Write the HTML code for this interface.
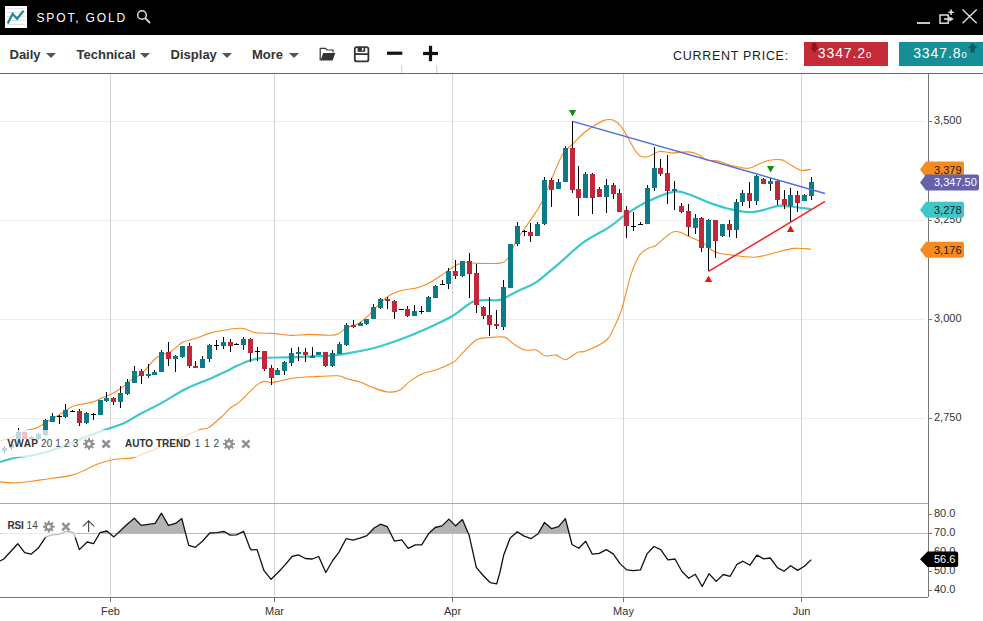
<!DOCTYPE html>
<html><head><meta charset="utf-8"><title>SPOT, GOLD</title>
<style>
html,body{margin:0;padding:0}
body{width:983px;height:621px;overflow:hidden;background:#fff;position:relative;font-family:"Liberation Sans",sans-serif}
.topbar{position:absolute;left:0;top:0;width:983px;height:35px;background:#000}
.logo{position:absolute;left:5px;top:6px;width:22px;height:22px;background:#fff}
.title{position:absolute;left:36.5px;top:11px;color:#fff;font-size:12px;letter-spacing:1.85px;line-height:14px}
.toolbar{position:absolute;left:0;top:35px;width:983px;height:38px;background:#fff;border-bottom:1px solid #666}
.menu{position:absolute;top:13px;font-size:13px;font-weight:bold;color:#333;line-height:14px}
.caret{position:absolute;top:17.6px;width:0;height:0;border-left:5px solid transparent;border-right:5px solid transparent;border-top:5.5px solid #555}
.cp{position:absolute;left:673px;top:14px;font-size:12.5px;letter-spacing:0.7px;color:#222;line-height:14px}
.pbox{position:absolute;top:7px;height:24px;color:#fff;font-size:14px;line-height:24px;letter-spacing:0.9px}
svg.chart{position:absolute;left:0;top:0}
</style></head><body>
<div class="topbar">
 <div class="logo"><svg width="22" height="22" viewBox="0 0 22 22">
  <g stroke="#e2e2e2" stroke-width="1"><line x1="2" y1="2.5" x2="20" y2="2.5"/><line x1="2" y1="6.5" x2="20" y2="6.5"/><line x1="2" y1="10.5" x2="20" y2="10.5"/><line x1="2" y1="14.5" x2="20" y2="14.5"/><line x1="2" y1="18.5" x2="20" y2="18.5"/></g>
  <polyline points="2.7,17.6 7.6,7.8 12.1,12.7 18.6,4.6" fill="none" stroke="#1a8796" stroke-width="2.2"/></svg></div>
 <div class="title">SPOT, GOLD</div>
 <svg style="position:absolute;left:136px;top:9px" width="16" height="16" viewBox="0 0 16 16"><circle cx="6" cy="6" r="4.3" fill="none" stroke="#ddd" stroke-width="1.5"/><line x1="9.2" y1="9.2" x2="14" y2="14" stroke="#ddd" stroke-width="1.8"/></svg>
 <svg style="position:absolute;left:910px;top:4px" width="73" height="28" viewBox="910 4 73 28">
  <line x1="917" y1="23" x2="930" y2="23" stroke="#ddd" stroke-width="1.8"/>
  <rect x="940" y="15" width="8.2" height="8.2" fill="none" stroke="#ddd" stroke-width="1.5"/>
  <path d="M944,19 L950,19" stroke="#ddd" stroke-width="1.6"/><path d="M949.3,16.2 L953.8,19 L949.3,21.8 Z" fill="#ddd"/>
  <path d="M951.1,9.5 L951.1,15 M948.4,12.2 L953.8,12.2" stroke="#ddd" stroke-width="1.6"/>
  <path d="M962.5,9.5 L976.7,23.2 M976.7,9.5 L962.5,23.2" stroke="#ddd" stroke-width="1.4"/>
 </svg>
</div>
<div class="toolbar">
 <div class="menu" style="left:9.5px">Daily</div><div class="caret" style="left:45.9px"></div>
 <div class="menu" style="left:76.5px">Technical</div><div class="caret" style="left:140.4px"></div>
 <div class="menu" style="left:170.6px">Display</div><div class="caret" style="left:221.8px"></div>
 <div class="menu" style="left:252px">More</div><div class="caret" style="left:288.5px"></div>
 <svg style="position:absolute;left:300px;top:0" width="160" height="38" viewBox="300 35 160 38">
  <path d="M320.2,48.3 L325.5,48.3 L327,50 L333,50 L333,52.4" fill="none" stroke="#333" stroke-width="1.2"/>
  <path d="M320.2,48.3 L320.2,60.5" fill="none" stroke="#333" stroke-width="1.2"/>
  <path d="M320.5,60.5 L323.2,53 L335.3,53 L332.6,60.5 Z" fill="#333"/>
  <rect x="354.8" y="47.2" width="13.6" height="14.2" rx="2" fill="none" stroke="#333" stroke-width="1.8"/>
  <rect x="357.6" y="47.2" width="7.6" height="4.6" fill="#333"/>
  <rect x="361.9" y="47.9" width="1.6" height="2.6" fill="#fff"/>
  <rect x="354.8" y="53.2" width="13.6" height="1.8" fill="#333"/>
  <rect x="387" y="51.6" width="15.3" height="3.2" fill="#111"/>
  <rect x="423" y="51.9" width="15" height="3.2" fill="#111"/>
  <rect x="428.9" y="45.8" width="3.2" height="15.4" fill="#111"/>
  <line x1="401.8" y1="65" x2="401.8" y2="73" stroke="#ccc" stroke-width="1"/>
  <line x1="436.8" y1="65" x2="436.8" y2="73" stroke="#ccc" stroke-width="1"/>
 </svg>
 <div class="cp">CURRENT PRICE:</div>
 <div class="pbox" style="left:804px;width:84px;background:#c42a37">
  <svg style="position:absolute;left:5.6px;top:1.2px" width="9" height="10" viewBox="0 0 9 10"><path d="M2.1,0 L6.6,0 L6.6,4.6 L8.7,4.6 L4.35,9.6 L0,4.6 L2.1,4.6 Z" fill="#8b1520"/></svg>
  <span style="position:absolute;left:13.8px;top:-1px">3347.2<span style="font-size:9.5px;letter-spacing:0">0</span></span>
 </div>
 <div class="pbox" style="left:899px;width:84px;background:#168e98">
  <svg style="position:absolute;left:69.1px;top:1.2px" width="10" height="10" viewBox="0 0 10 10"><path d="M2.4,9.6 L6.9,9.6 L6.9,5 L9.4,5 L4.65,0 L0,5 L2.4,5 Z" fill="#0a5f66"/></svg>
  <span style="position:absolute;left:14.2px;top:-1px">3347.8<span style="font-size:9.5px;letter-spacing:0">0</span></span>
 </div>
</div>
<svg class="chart" width="983" height="621" viewBox="0 0 983 621">
<line x1="0" y1="121.5" x2="926" y2="121.5" stroke="#ededed" stroke-width="1"/>
<line x1="928" y1="121.5" x2="932" y2="121.5" stroke="#777" stroke-width="1"/>
<line x1="0" y1="220.5" x2="926" y2="220.5" stroke="#ededed" stroke-width="1"/>
<line x1="928" y1="220.5" x2="932" y2="220.5" stroke="#777" stroke-width="1"/>
<line x1="0" y1="319.5" x2="926" y2="319.5" stroke="#ededed" stroke-width="1"/>
<line x1="928" y1="319.5" x2="932" y2="319.5" stroke="#777" stroke-width="1"/>
<line x1="0" y1="418.5" x2="926" y2="418.5" stroke="#ededed" stroke-width="1"/>
<line x1="928" y1="418.5" x2="932" y2="418.5" stroke="#777" stroke-width="1"/>
<line x1="110.5" y1="74" x2="110.5" y2="597" stroke="#d4d4d4" stroke-width="1"/>
<line x1="110.5" y1="597" x2="110.5" y2="602" stroke="#777" stroke-width="1"/>
<line x1="274.5" y1="74" x2="274.5" y2="597" stroke="#d4d4d4" stroke-width="1"/>
<line x1="274.5" y1="597" x2="274.5" y2="602" stroke="#777" stroke-width="1"/>
<line x1="452.5" y1="74" x2="452.5" y2="597" stroke="#d4d4d4" stroke-width="1"/>
<line x1="452.5" y1="597" x2="452.5" y2="602" stroke="#777" stroke-width="1"/>
<line x1="623.5" y1="74" x2="623.5" y2="597" stroke="#d4d4d4" stroke-width="1"/>
<line x1="623.5" y1="597" x2="623.5" y2="602" stroke="#777" stroke-width="1"/>
<line x1="801.5" y1="74" x2="801.5" y2="597" stroke="#d4d4d4" stroke-width="1"/>
<line x1="801.5" y1="597" x2="801.5" y2="602" stroke="#777" stroke-width="1"/>
<line x1="0" y1="503.5" x2="928" y2="503.5" stroke="#aaa" stroke-width="1"/>
<line x1="0" y1="533.5" x2="928" y2="533.5" stroke="#bbb" stroke-width="1"/>
<line x1="0" y1="597.5" x2="928" y2="597.5" stroke="#777" stroke-width="1"/>
<line x1="928" y1="514.5" x2="932" y2="514.5" stroke="#777" stroke-width="1"/>
<line x1="928" y1="533.5" x2="932" y2="533.5" stroke="#777" stroke-width="1"/>
<line x1="928" y1="552.5" x2="932" y2="552.5" stroke="#777" stroke-width="1"/>
<line x1="928" y1="571.5" x2="932" y2="571.5" stroke="#777" stroke-width="1"/>
<line x1="928" y1="590.5" x2="932" y2="590.5" stroke="#777" stroke-width="1"/>
<line x1="928.5" y1="74" x2="928.5" y2="597" stroke="#777" stroke-width="1"/>
<path d="M0.0,441.2 C2.0,440.5 7.8,438.9 12.2,437.1 C16.6,435.3 22.2,432.2 26.4,430.6 C30.6,429.0 34.4,428.8 37.6,427.4 C40.8,426.0 41.9,424.8 45.8,422.5 C49.7,420.2 56.6,416.3 61.0,413.7 C65.4,411.1 68.8,408.2 72.2,406.6 C75.6,405.0 78.0,404.9 81.4,404.2 C84.8,403.4 89.2,403.1 92.6,402.1 C96.0,401.1 98.2,399.7 101.7,398.1 C105.2,396.6 110.2,394.8 113.9,392.8 C117.6,390.8 121.4,387.9 124.1,385.9 C126.8,383.9 127.0,382.9 130.0,380.8 C133.0,378.7 137.8,376.9 142.2,373.1 C146.6,369.3 151.7,361.4 156.4,357.8 C161.2,354.2 166.3,354.3 170.7,351.7 C175.1,349.1 178.8,344.3 182.9,342.1 C187.0,339.9 190.7,339.9 195.1,338.5 C199.5,337.1 204.6,334.8 209.3,333.4 C214.1,332.0 218.2,331.1 223.6,330.3 C229.0,329.5 236.5,327.9 241.9,328.3 C247.3,328.7 251.0,332.0 256.1,332.8 C261.2,333.6 266.6,333.0 272.4,333.4 C278.2,333.8 284.6,335.2 290.7,335.4 C296.8,335.6 302.4,334.4 309.0,334.4 C315.6,334.4 325.1,335.3 330.0,335.2 C334.9,335.1 335.4,335.2 338.1,334.0 C340.8,332.8 342.9,329.7 346.3,327.9 C349.7,326.1 354.8,325.5 358.5,323.4 C362.2,321.3 365.0,318.9 368.7,315.3 C372.4,311.8 377.2,305.6 380.9,302.1 C384.6,298.6 387.6,296.4 391.0,294.5 C394.4,292.6 396.8,291.6 401.2,290.5 C405.6,289.4 412.8,289.1 417.5,287.8 C422.2,286.5 425.3,285.1 429.7,282.7 C434.1,280.3 439.8,276.3 443.9,273.6 C448.0,270.9 450.7,268.3 454.1,266.4 C457.5,264.5 460.2,262.9 464.3,262.4 C468.4,261.9 472.1,263.4 478.5,263.4 C484.9,263.4 497.5,264.3 502.9,262.4 C508.3,260.5 508.8,255.9 511.1,252.2 C513.4,248.5 513.4,245.6 516.8,240.0 C520.2,234.4 527.2,225.2 531.4,218.9 C535.6,212.6 538.4,209.1 541.9,202.1 C545.4,195.1 548.9,185.0 552.4,177.0 C555.9,169.0 559.3,159.6 562.8,154.0 C566.3,148.4 569.8,147.0 573.3,143.5 C576.8,140.0 580.3,136.0 583.8,133.0 C587.3,130.0 590.7,127.9 594.2,125.7 C597.7,123.5 601.6,121.0 604.7,120.1 C607.9,119.2 610.5,119.2 613.1,120.1 C615.7,121.0 618.0,122.9 620.4,125.7 C622.8,128.6 625.4,133.4 627.7,137.2 C630.0,141.0 631.9,145.5 634.0,148.7 C636.1,151.8 637.8,154.8 640.3,156.1 C642.8,157.4 645.6,157.3 648.7,156.5 C651.9,155.7 655.4,152.1 659.2,151.5 C663.0,150.9 666.8,152.8 671.7,152.9 C676.6,153.0 684.0,151.6 688.5,151.9 C693.0,152.2 695.4,153.3 698.4,154.6 C701.4,155.9 703.6,158.8 706.7,159.9 C709.8,161.0 713.0,160.0 717.2,160.9 C721.4,161.8 726.6,164.3 731.8,165.5 C737.0,166.7 744.1,168.4 748.6,168.2 C753.1,168.0 755.5,165.4 759.0,164.1 C762.5,162.8 765.7,161.0 769.5,160.3 C773.3,159.6 778.5,159.2 782.0,159.9 C785.5,160.6 787.2,163.0 790.4,164.7 C793.5,166.4 797.5,169.5 800.9,170.3 C804.3,171.1 809.3,169.5 811.0,169.3" fill="none" stroke="#f98a1e" stroke-width="1.1"/>
<path d="M0.0,481.9 C2.7,482.1 9.5,483.2 16.3,482.9 C23.1,482.6 31.6,481.1 40.7,479.9 C49.9,478.6 63.7,477.1 71.2,475.4 C78.7,473.7 81.1,471.6 85.5,469.7 C89.9,467.8 93.0,465.7 97.7,464.0 C102.4,462.3 108.2,460.5 113.9,459.5 C119.7,458.5 126.8,459.1 132.2,457.9 C137.6,456.7 141.4,454.3 146.5,452.4 C151.6,450.5 156.7,448.9 162.8,446.3 C168.9,443.8 176.9,439.9 183.1,437.1 C189.3,434.3 195.7,431.1 200.0,429.5 C204.3,427.9 205.1,429.8 209.0,427.4 C212.9,424.9 220.2,417.9 223.6,414.8 C227.0,411.7 226.8,410.8 229.5,408.6 C232.2,406.4 236.7,404.3 239.9,401.6 C243.1,398.9 246.0,395.4 248.8,392.6 C251.7,389.8 254.5,386.8 257.0,384.9 C259.5,383.0 261.2,381.8 263.6,381.4 C266.0,381.0 268.9,382.6 271.2,382.6 C273.5,382.6 273.7,382.3 277.3,381.6 C280.9,380.9 286.8,379.0 292.8,378.2 C298.8,377.4 305.6,377.1 313.1,376.7 C320.6,376.3 332.3,375.4 338.0,375.8 C343.7,376.2 343.2,377.7 347.1,378.8 C351.0,379.9 357.3,381.1 361.4,382.5 C365.5,383.9 367.2,385.4 371.6,387.0 C376.0,388.6 383.1,391.5 387.8,392.0 C392.5,392.5 396.3,391.9 400.0,390.0 C403.7,388.1 406.5,383.6 410.2,380.9 C413.9,378.2 418.0,375.6 422.4,373.7 C426.8,371.8 431.9,371.4 436.7,369.7 C441.4,368.0 447.7,365.2 450.9,363.6 C454.1,362.0 454.1,361.9 456.1,360.0 C458.1,358.1 459.7,355.8 463.1,352.4 C466.5,349.0 472.2,342.1 476.5,339.7 C480.8,337.2 484.0,338.1 488.7,337.7 C493.4,337.3 500.4,336.1 504.5,337.1 C508.6,338.1 510.1,341.8 513.5,343.9 C516.9,346.0 521.0,349.0 524.8,350.0 C528.6,351.0 532.7,349.0 536.1,350.0 C539.5,351.0 541.7,354.9 545.1,355.8 C548.5,356.7 553.0,354.5 556.4,355.1 C559.8,355.8 561.8,360.2 565.4,359.7 C569.0,359.2 574.4,353.6 577.8,352.2 C581.2,350.8 581.0,353.1 585.7,351.1 C590.4,349.2 601.5,344.0 606.0,340.5 C610.5,337.0 610.1,335.6 612.7,330.3 C615.3,325.0 618.8,318.1 621.8,308.9 C624.8,299.7 627.8,284.1 630.8,275.1 C633.8,266.1 636.8,259.3 639.8,254.8 C642.8,250.3 646.2,249.5 648.8,248.0 C651.4,246.5 653.0,247.5 655.6,245.8 C658.2,244.1 661.6,240.2 664.6,237.9 C667.6,235.6 671.0,232.7 673.6,231.8 C676.2,230.9 677.8,231.5 680.4,232.3 C683.0,233.1 685.7,235.1 689.4,236.8 C693.1,238.5 698.3,240.0 702.6,242.5 C706.9,245.0 710.2,249.9 715.1,252.0 C720.0,254.1 725.2,254.2 731.8,255.1 C738.4,256.0 747.9,257.6 754.9,257.2 C761.9,256.8 767.1,254.5 773.7,253.0 C780.3,251.5 788.4,249.0 794.6,248.4 C800.8,247.8 808.3,249.1 811.0,249.2" fill="none" stroke="#f98a1e" stroke-width="1.1"/>
<path d="M0.0,462.0 C2.7,461.2 10.5,458.7 16.3,457.5 C22.1,456.3 27.2,456.7 34.6,455.0 C42.1,453.3 52.5,450.3 61.0,447.3 C69.5,444.3 78.7,439.8 85.5,437.1 C92.3,434.4 95.6,433.2 101.7,431.0 C107.8,428.8 117.4,425.8 122.1,423.9 C126.8,422.0 126.6,421.8 130.0,419.9 C133.4,418.0 137.3,415.4 142.4,412.7 C147.5,410.0 153.1,407.7 160.5,403.6 C167.9,399.5 178.5,392.5 187.0,388.3 C195.5,384.1 205.0,381.0 211.4,378.2 C217.8,375.4 221.2,373.7 225.4,371.7 C229.6,369.7 232.2,368.1 236.6,366.1 C241.0,364.1 247.5,361.2 252.1,359.8 C256.7,358.4 257.5,358.2 264.3,357.8 C271.1,357.4 281.9,357.6 292.8,357.2 C303.8,356.8 320.4,356.4 330.0,355.7 C339.6,355.0 342.8,354.2 350.3,352.9 C357.8,351.6 366.3,350.1 374.8,347.8 C383.3,345.5 392.8,342.2 401.5,339.0 C410.2,335.8 418.6,332.3 427.0,328.5 C435.4,324.7 444.4,320.7 452.0,316.3 C459.6,311.9 466.3,304.8 472.4,302.1 C478.5,299.4 484.1,300.4 488.7,300.0 C493.3,299.6 495.1,301.4 500.0,299.9 C504.9,298.4 512.0,293.8 518.0,290.9 C524.0,288.0 529.3,286.8 536.1,282.3 C542.9,277.8 550.7,270.4 558.6,263.8 C566.5,257.2 575.0,248.5 583.4,242.4 C591.8,236.3 601.8,231.9 608.9,227.3 C616.0,222.7 619.4,218.9 625.7,214.7 C632.0,210.5 638.6,205.9 646.6,202.1 C654.6,198.3 666.6,192.9 673.8,191.7 C681.0,190.5 684.5,193.1 690.0,194.8 C695.5,196.5 700.8,199.5 706.7,201.7 C712.6,203.9 718.6,206.2 725.6,208.0 C732.6,209.8 742.3,211.8 748.6,212.2 C754.9,212.5 758.3,211.1 763.2,210.1 C768.1,209.1 773.4,206.5 777.9,205.9 C782.4,205.3 784.9,206.0 790.4,206.5 C795.9,207.0 807.6,208.7 811.0,209.1" fill="none" stroke="#3cc8c8" stroke-width="2.2"/>
<line x1="4.5" y1="446" x2="4.5" y2="453" stroke="#000" stroke-width="1"/>
<rect x="2" y="448" width="5" height="3" fill="#0b7b88"/>
<line x1="11.5" y1="441" x2="11.5" y2="450" stroke="#000" stroke-width="1"/>
<rect x="9" y="444" width="5" height="4" fill="#0b7b88"/>
<line x1="18.5" y1="428" x2="18.5" y2="440" stroke="#000" stroke-width="1"/>
<rect x="16" y="432" width="5" height="7" fill="#0b7b88"/>
<line x1="24.5" y1="432" x2="24.5" y2="439" stroke="#000" stroke-width="1"/>
<rect x="22" y="432" width="5" height="7" fill="#c0283a"/>
<line x1="31.5" y1="436" x2="31.5" y2="440" stroke="#000" stroke-width="1"/>
<rect x="29" y="437" width="5" height="2" fill="#c0283a"/>
<line x1="38.5" y1="433" x2="38.5" y2="440" stroke="#000" stroke-width="1"/>
<rect x="36" y="434" width="5" height="5" fill="#0b7b88"/>
<line x1="45.5" y1="419" x2="45.5" y2="436" stroke="#000" stroke-width="1"/>
<rect x="43" y="420" width="5" height="15" fill="#0b7b88"/>
<line x1="52.5" y1="413" x2="52.5" y2="422" stroke="#000" stroke-width="1"/>
<rect x="50" y="416" width="5" height="6" fill="#0b7b88"/>
<line x1="59.5" y1="415" x2="59.5" y2="424" stroke="#000" stroke-width="1"/>
<line x1="57" y1="416.5" x2="62" y2="416.5" stroke="#000" stroke-width="1"/>
<line x1="65.5" y1="404" x2="65.5" y2="418" stroke="#000" stroke-width="1"/>
<rect x="63" y="410" width="5" height="7" fill="#0b7b88"/>
<line x1="72.5" y1="410" x2="72.5" y2="412" stroke="#000" stroke-width="1"/>
<line x1="70" y1="411.5" x2="75" y2="411.5" stroke="#000" stroke-width="1"/>
<line x1="79.5" y1="409" x2="79.5" y2="426" stroke="#000" stroke-width="1"/>
<rect x="77" y="411" width="5" height="12" fill="#c0283a"/>
<line x1="86.5" y1="412" x2="86.5" y2="424" stroke="#000" stroke-width="1"/>
<rect x="84" y="413" width="5" height="10" fill="#0b7b88"/>
<line x1="93.5" y1="413" x2="93.5" y2="420" stroke="#000" stroke-width="1"/>
<line x1="91" y1="414.5" x2="96" y2="414.5" stroke="#000" stroke-width="1"/>
<line x1="100.5" y1="400" x2="100.5" y2="415" stroke="#000" stroke-width="1"/>
<rect x="98" y="400" width="5" height="15" fill="#0b7b88"/>
<line x1="106.5" y1="392" x2="106.5" y2="402" stroke="#000" stroke-width="1"/>
<rect x="104" y="398" width="5" height="3" fill="#0b7b88"/>
<line x1="113.5" y1="397" x2="113.5" y2="405" stroke="#000" stroke-width="1"/>
<rect x="111" y="398" width="5" height="4" fill="#c0283a"/>
<line x1="120.5" y1="386" x2="120.5" y2="408" stroke="#000" stroke-width="1"/>
<rect x="118" y="393" width="5" height="9" fill="#0b7b88"/>
<line x1="127.5" y1="379" x2="127.5" y2="395" stroke="#000" stroke-width="1"/>
<rect x="125" y="382" width="5" height="12" fill="#0b7b88"/>
<line x1="134.5" y1="366" x2="134.5" y2="383" stroke="#000" stroke-width="1"/>
<rect x="132" y="371" width="5" height="12" fill="#0b7b88"/>
<line x1="141.5" y1="369" x2="141.5" y2="384" stroke="#000" stroke-width="1"/>
<rect x="139" y="371" width="5" height="5" fill="#c0283a"/>
<line x1="148.5" y1="364" x2="148.5" y2="378" stroke="#000" stroke-width="1"/>
<rect x="146" y="374" width="5" height="2" fill="#0b7b88"/>
<line x1="154.5" y1="370" x2="154.5" y2="375" stroke="#000" stroke-width="1"/>
<rect x="152" y="372" width="5" height="3" fill="#0b7b88"/>
<line x1="161.5" y1="350" x2="161.5" y2="372" stroke="#000" stroke-width="1"/>
<rect x="159" y="352" width="5" height="20" fill="#0b7b88"/>
<line x1="168.5" y1="342" x2="168.5" y2="366" stroke="#000" stroke-width="1"/>
<rect x="166" y="352" width="5" height="7" fill="#c0283a"/>
<line x1="175.5" y1="355" x2="175.5" y2="372" stroke="#000" stroke-width="1"/>
<rect x="173" y="356" width="5" height="3" fill="#0b7b88"/>
<line x1="182.5" y1="346" x2="182.5" y2="358" stroke="#000" stroke-width="1"/>
<rect x="180" y="346" width="5" height="11" fill="#0b7b88"/>
<line x1="189.5" y1="343" x2="189.5" y2="368" stroke="#000" stroke-width="1"/>
<rect x="187" y="346" width="5" height="20" fill="#c0283a"/>
<line x1="195.5" y1="361" x2="195.5" y2="368" stroke="#000" stroke-width="1"/>
<rect x="193" y="366" width="5" height="2" fill="#c0283a"/>
<line x1="202.5" y1="356" x2="202.5" y2="368" stroke="#000" stroke-width="1"/>
<rect x="200" y="359" width="5" height="9" fill="#0b7b88"/>
<line x1="209.5" y1="344" x2="209.5" y2="362" stroke="#000" stroke-width="1"/>
<rect x="207" y="345" width="5" height="14" fill="#0b7b88"/>
<line x1="216.5" y1="340" x2="216.5" y2="350" stroke="#000" stroke-width="1"/>
<line x1="214" y1="345.5" x2="219" y2="345.5" stroke="#000" stroke-width="1"/>
<line x1="223.5" y1="337" x2="223.5" y2="349" stroke="#000" stroke-width="1"/>
<rect x="221" y="342" width="5" height="4" fill="#0b7b88"/>
<line x1="230.5" y1="339" x2="230.5" y2="352" stroke="#000" stroke-width="1"/>
<rect x="228" y="342" width="5" height="4" fill="#c0283a"/>
<line x1="236.5" y1="343" x2="236.5" y2="345" stroke="#000" stroke-width="1"/>
<line x1="234" y1="344.5" x2="239" y2="344.5" stroke="#000" stroke-width="1"/>
<line x1="243.5" y1="337" x2="243.5" y2="350" stroke="#000" stroke-width="1"/>
<rect x="241" y="339" width="5" height="6" fill="#0b7b88"/>
<line x1="250.5" y1="338" x2="250.5" y2="362" stroke="#000" stroke-width="1"/>
<rect x="248" y="339" width="5" height="14" fill="#c0283a"/>
<line x1="257.5" y1="347" x2="257.5" y2="361" stroke="#000" stroke-width="1"/>
<line x1="255" y1="351.5" x2="260" y2="351.5" stroke="#000" stroke-width="1"/>
<line x1="264.5" y1="351" x2="264.5" y2="371" stroke="#000" stroke-width="1"/>
<rect x="262" y="351" width="5" height="18" fill="#c0283a"/>
<line x1="271.5" y1="365" x2="271.5" y2="385" stroke="#000" stroke-width="1"/>
<rect x="269" y="368" width="5" height="10" fill="#c0283a"/>
<line x1="277.5" y1="368" x2="277.5" y2="375" stroke="#000" stroke-width="1"/>
<rect x="275" y="370" width="5" height="5" fill="#0b7b88"/>
<line x1="284.5" y1="361" x2="284.5" y2="375" stroke="#000" stroke-width="1"/>
<rect x="282" y="362" width="5" height="9" fill="#0b7b88"/>
<line x1="291.5" y1="348" x2="291.5" y2="366" stroke="#000" stroke-width="1"/>
<rect x="289" y="353" width="5" height="10" fill="#0b7b88"/>
<line x1="298.5" y1="347" x2="298.5" y2="361" stroke="#000" stroke-width="1"/>
<rect x="296" y="352" width="5" height="2" fill="#0b7b88"/>
<line x1="305.5" y1="348" x2="305.5" y2="362" stroke="#000" stroke-width="1"/>
<rect x="303" y="352" width="5" height="3" fill="#c0283a"/>
<line x1="312.5" y1="347" x2="312.5" y2="358" stroke="#000" stroke-width="1"/>
<rect x="310" y="356" width="5" height="2" fill="#0b7b88"/>
<line x1="318.5" y1="352" x2="318.5" y2="355" stroke="#000" stroke-width="1"/>
<rect x="316" y="352" width="5" height="3" fill="#0b7b88"/>
<line x1="325.5" y1="352" x2="325.5" y2="367" stroke="#000" stroke-width="1"/>
<rect x="323" y="352" width="5" height="14" fill="#c0283a"/>
<line x1="332.5" y1="350" x2="332.5" y2="367" stroke="#000" stroke-width="1"/>
<rect x="330" y="353" width="5" height="13" fill="#0b7b88"/>
<line x1="339.5" y1="342" x2="339.5" y2="354" stroke="#000" stroke-width="1"/>
<rect x="337" y="344" width="5" height="10" fill="#0b7b88"/>
<line x1="346.5" y1="323" x2="346.5" y2="346" stroke="#000" stroke-width="1"/>
<rect x="344" y="325" width="5" height="20" fill="#0b7b88"/>
<line x1="353.5" y1="320" x2="353.5" y2="328" stroke="#000" stroke-width="1"/>
<rect x="351" y="325" width="5" height="2" fill="#c0283a"/>
<line x1="360.5" y1="322" x2="360.5" y2="326" stroke="#000" stroke-width="1"/>
<rect x="358" y="323" width="5" height="3" fill="#0b7b88"/>
<line x1="366.5" y1="319" x2="366.5" y2="325" stroke="#000" stroke-width="1"/>
<rect x="364" y="319" width="5" height="5" fill="#0b7b88"/>
<line x1="373.5" y1="304" x2="373.5" y2="319" stroke="#000" stroke-width="1"/>
<rect x="371" y="307" width="5" height="12" fill="#0b7b88"/>
<line x1="380.5" y1="298" x2="380.5" y2="309" stroke="#000" stroke-width="1"/>
<rect x="378" y="299" width="5" height="9" fill="#0b7b88"/>
<line x1="387.5" y1="297" x2="387.5" y2="309" stroke="#000" stroke-width="1"/>
<rect x="385" y="299" width="5" height="2" fill="#c0283a"/>
<line x1="394.5" y1="300" x2="394.5" y2="319" stroke="#000" stroke-width="1"/>
<rect x="392" y="301" width="5" height="11" fill="#c0283a"/>
<line x1="401.5" y1="309" x2="401.5" y2="310" stroke="#000" stroke-width="1"/>
<line x1="399" y1="309.5" x2="404" y2="309.5" stroke="#000" stroke-width="1"/>
<line x1="407.5" y1="306" x2="407.5" y2="317" stroke="#000" stroke-width="1"/>
<rect x="405" y="309" width="5" height="7" fill="#c0283a"/>
<line x1="414.5" y1="305" x2="414.5" y2="316" stroke="#000" stroke-width="1"/>
<rect x="412" y="311" width="5" height="5" fill="#0b7b88"/>
<line x1="421.5" y1="306" x2="421.5" y2="314" stroke="#000" stroke-width="1"/>
<line x1="419" y1="311.5" x2="424" y2="311.5" stroke="#000" stroke-width="1"/>
<line x1="428.5" y1="296" x2="428.5" y2="312" stroke="#000" stroke-width="1"/>
<rect x="426" y="297" width="5" height="15" fill="#0b7b88"/>
<line x1="435.5" y1="285" x2="435.5" y2="298" stroke="#000" stroke-width="1"/>
<rect x="433" y="286" width="5" height="12" fill="#0b7b88"/>
<line x1="442.5" y1="280" x2="442.5" y2="285" stroke="#000" stroke-width="1"/>
<line x1="440" y1="284.5" x2="445" y2="284.5" stroke="#000" stroke-width="1"/>
<line x1="448.5" y1="268" x2="448.5" y2="289" stroke="#000" stroke-width="1"/>
<rect x="446" y="271" width="5" height="13" fill="#0b7b88"/>
<line x1="455.5" y1="260" x2="455.5" y2="279" stroke="#000" stroke-width="1"/>
<rect x="453" y="271" width="5" height="5" fill="#c0283a"/>
<line x1="462.5" y1="261" x2="462.5" y2="277" stroke="#000" stroke-width="1"/>
<rect x="460" y="261" width="5" height="15" fill="#0b7b88"/>
<line x1="469.5" y1="253" x2="469.5" y2="298" stroke="#000" stroke-width="1"/>
<rect x="467" y="261" width="5" height="13" fill="#c0283a"/>
<line x1="476.5" y1="264" x2="476.5" y2="313" stroke="#000" stroke-width="1"/>
<rect x="474" y="273" width="5" height="32" fill="#c0283a"/>
<line x1="483.5" y1="306" x2="483.5" y2="319" stroke="#000" stroke-width="1"/>
<rect x="481" y="307" width="5" height="9" fill="#c0283a"/>
<line x1="489.5" y1="297" x2="489.5" y2="336" stroke="#000" stroke-width="1"/>
<rect x="487" y="315" width="5" height="10" fill="#c0283a"/>
<line x1="496.5" y1="310" x2="496.5" y2="329" stroke="#000" stroke-width="1"/>
<rect x="494" y="324" width="5" height="2" fill="#c0283a"/>
<line x1="503.5" y1="280" x2="503.5" y2="330" stroke="#000" stroke-width="1"/>
<rect x="501" y="287" width="5" height="40" fill="#0b7b88"/>
<line x1="510.5" y1="244" x2="510.5" y2="288" stroke="#000" stroke-width="1"/>
<rect x="508" y="244" width="5" height="44" fill="#0b7b88"/>
<line x1="517.5" y1="222" x2="517.5" y2="246" stroke="#000" stroke-width="1"/>
<rect x="515" y="226" width="5" height="18" fill="#0b7b88"/>
<line x1="524.5" y1="230" x2="524.5" y2="236" stroke="#000" stroke-width="1"/>
<line x1="522" y1="231.5" x2="527" y2="231.5" stroke="#000" stroke-width="1"/>
<line x1="530.5" y1="223" x2="530.5" y2="242" stroke="#000" stroke-width="1"/>
<rect x="528" y="232" width="5" height="4" fill="#c0283a"/>
<line x1="537.5" y1="222" x2="537.5" y2="236" stroke="#000" stroke-width="1"/>
<rect x="535" y="224" width="5" height="12" fill="#0b7b88"/>
<line x1="544.5" y1="177" x2="544.5" y2="225" stroke="#000" stroke-width="1"/>
<rect x="542" y="180" width="5" height="44" fill="#0b7b88"/>
<line x1="551.5" y1="178" x2="551.5" y2="207" stroke="#000" stroke-width="1"/>
<rect x="549" y="180" width="5" height="10" fill="#c0283a"/>
<line x1="558.5" y1="179" x2="558.5" y2="189" stroke="#000" stroke-width="1"/>
<rect x="556" y="182" width="5" height="7" fill="#0b7b88"/>
<line x1="565.5" y1="146" x2="565.5" y2="182" stroke="#000" stroke-width="1"/>
<rect x="563" y="148" width="5" height="34" fill="#0b7b88"/>
<line x1="572.5" y1="121" x2="572.5" y2="193" stroke="#000" stroke-width="1"/>
<rect x="570" y="148" width="5" height="42" fill="#c0283a"/>
<line x1="578.5" y1="166" x2="578.5" y2="216" stroke="#000" stroke-width="1"/>
<rect x="576" y="189" width="5" height="9" fill="#c0283a"/>
<line x1="585.5" y1="172" x2="585.5" y2="198" stroke="#000" stroke-width="1"/>
<rect x="583" y="174" width="5" height="24" fill="#0b7b88"/>
<line x1="592.5" y1="173" x2="592.5" y2="214" stroke="#000" stroke-width="1"/>
<rect x="590" y="174" width="5" height="24" fill="#c0283a"/>
<line x1="599.5" y1="187" x2="599.5" y2="197" stroke="#000" stroke-width="1"/>
<rect x="597" y="189" width="5" height="8" fill="#c0283a"/>
<line x1="606.5" y1="179" x2="606.5" y2="213" stroke="#000" stroke-width="1"/>
<rect x="604" y="185" width="5" height="12" fill="#0b7b88"/>
<line x1="613.5" y1="183" x2="613.5" y2="199" stroke="#000" stroke-width="1"/>
<rect x="611" y="185" width="5" height="9" fill="#c0283a"/>
<line x1="619.5" y1="189" x2="619.5" y2="212" stroke="#000" stroke-width="1"/>
<rect x="617" y="193" width="5" height="19" fill="#c0283a"/>
<line x1="626.5" y1="206" x2="626.5" y2="238" stroke="#000" stroke-width="1"/>
<rect x="624" y="210" width="5" height="16" fill="#c0283a"/>
<line x1="633.5" y1="212" x2="633.5" y2="231" stroke="#000" stroke-width="1"/>
<line x1="631" y1="226.5" x2="636" y2="226.5" stroke="#000" stroke-width="1"/>
<line x1="640.5" y1="222" x2="640.5" y2="225" stroke="#000" stroke-width="1"/>
<line x1="638" y1="224.5" x2="643" y2="224.5" stroke="#000" stroke-width="1"/>
<line x1="647.5" y1="185" x2="647.5" y2="224" stroke="#000" stroke-width="1"/>
<rect x="645" y="188" width="5" height="36" fill="#0b7b88"/>
<line x1="654.5" y1="147" x2="654.5" y2="191" stroke="#000" stroke-width="1"/>
<rect x="652" y="168" width="5" height="20" fill="#0b7b88"/>
<line x1="660.5" y1="159" x2="660.5" y2="176" stroke="#000" stroke-width="1"/>
<rect x="658" y="168" width="5" height="6" fill="#c0283a"/>
<line x1="667.5" y1="155" x2="667.5" y2="204" stroke="#000" stroke-width="1"/>
<rect x="665" y="173" width="5" height="18" fill="#c0283a"/>
<line x1="674.5" y1="181" x2="674.5" y2="210" stroke="#000" stroke-width="1"/>
<rect x="672" y="189" width="5" height="2" fill="#0b7b88"/>
<line x1="681.5" y1="203" x2="681.5" y2="213" stroke="#000" stroke-width="1"/>
<rect x="679" y="206" width="5" height="6" fill="#c0283a"/>
<line x1="688.5" y1="204" x2="688.5" y2="236" stroke="#000" stroke-width="1"/>
<rect x="686" y="211" width="5" height="16" fill="#c0283a"/>
<line x1="695.5" y1="214" x2="695.5" y2="234" stroke="#000" stroke-width="1"/>
<rect x="693" y="218" width="5" height="10" fill="#0b7b88"/>
<line x1="701.5" y1="217" x2="701.5" y2="252" stroke="#000" stroke-width="1"/>
<rect x="699" y="218" width="5" height="30" fill="#c0283a"/>
<line x1="708.5" y1="219" x2="708.5" y2="271" stroke="#000" stroke-width="1"/>
<rect x="706" y="220" width="5" height="28" fill="#0b7b88"/>
<line x1="715.5" y1="220" x2="715.5" y2="258" stroke="#000" stroke-width="1"/>
<rect x="713" y="220" width="5" height="21" fill="#c0283a"/>
<line x1="722.5" y1="224" x2="722.5" y2="237" stroke="#000" stroke-width="1"/>
<rect x="720" y="224" width="5" height="12" fill="#0b7b88"/>
<line x1="729.5" y1="220" x2="729.5" y2="237" stroke="#000" stroke-width="1"/>
<rect x="727" y="224" width="5" height="6" fill="#c0283a"/>
<line x1="736.5" y1="199" x2="736.5" y2="238" stroke="#000" stroke-width="1"/>
<rect x="734" y="202" width="5" height="28" fill="#0b7b88"/>
<line x1="742.5" y1="190" x2="742.5" y2="206" stroke="#000" stroke-width="1"/>
<rect x="740" y="193" width="5" height="9" fill="#0b7b88"/>
<line x1="749.5" y1="182" x2="749.5" y2="208" stroke="#000" stroke-width="1"/>
<rect x="747" y="193" width="5" height="8" fill="#c0283a"/>
<line x1="756.5" y1="175" x2="756.5" y2="205" stroke="#000" stroke-width="1"/>
<rect x="754" y="176" width="5" height="25" fill="#0b7b88"/>
<line x1="763.5" y1="178" x2="763.5" y2="184" stroke="#000" stroke-width="1"/>
<rect x="761" y="179" width="5" height="5" fill="#c0283a"/>
<line x1="770.5" y1="178" x2="770.5" y2="191" stroke="#000" stroke-width="1"/>
<rect x="768" y="181" width="5" height="3" fill="#0b7b88"/>
<line x1="777.5" y1="180" x2="777.5" y2="205" stroke="#000" stroke-width="1"/>
<rect x="775" y="181" width="5" height="19" fill="#c0283a"/>
<line x1="784.5" y1="190" x2="784.5" y2="209" stroke="#000" stroke-width="1"/>
<rect x="782" y="199" width="5" height="6" fill="#c0283a"/>
<line x1="790.5" y1="188" x2="790.5" y2="222" stroke="#000" stroke-width="1"/>
<rect x="788" y="195" width="5" height="11" fill="#0b7b88"/>
<line x1="797.5" y1="191" x2="797.5" y2="212" stroke="#000" stroke-width="1"/>
<rect x="795" y="195" width="5" height="8" fill="#c0283a"/>
<line x1="804.5" y1="194" x2="804.5" y2="201" stroke="#000" stroke-width="1"/>
<rect x="802" y="195" width="5" height="6" fill="#0b7b88"/>
<line x1="811.5" y1="177" x2="811.5" y2="200" stroke="#000" stroke-width="1"/>
<rect x="809" y="182" width="5" height="14" fill="#0b7b88"/>
<line x1="572.6" y1="121.4" x2="825" y2="193.5" stroke="#4d6ee0" stroke-width="1.5"/>
<line x1="708.5" y1="271.4" x2="825" y2="201.4" stroke="#f02424" stroke-width="1.5"/>
<polygon points="569.0,110 576.2,110 572.6,116.6" fill="#128a12"/>
<polygon points="767.0,166 774.2,166 770.6,172.6" fill="#128a12"/>
<polygon points="704.9,282.0 712.1,282.0 708.5,275.4" fill="#f01010"/>
<polygon points="787.0,232.0 794.2,232.0 790.6,225.4" fill="#f01010"/>
<polygon points="61.3,533.3 66.6,531.0 73.8,533.0 73.9,533.3" fill="#b3b3b3"/>
<polygon points="99.6,533.3 100.0,532.6 106.8,531.0 109.6,533.3" fill="#b3b3b3"/>
<polygon points="117.7,533.3 127.2,524.2 134.3,518.3 141.1,525.4 155.1,523.4 161.5,513.2 168.4,525.4 175.5,523.4 181.8,518.6 185.6,533.3" fill="#b3b3b3"/>
<polygon points="209.5,533.3 209.8,533.0 217.4,532.6 223.8,531.3 227.2,533.3" fill="#b3b3b3"/>
<polygon points="239.5,533.3 243.6,531.3 244.4,533.3" fill="#b3b3b3"/>
<polygon points="369.1,533.3 374.1,528.0 380.5,524.2 387.3,526.7 390.6,533.3" fill="#b3b3b3"/>
<polygon points="429.0,533.3 435.1,527.5 442.0,525.9 448.9,519.1 455.5,525.9 462.4,519.6 468.2,533.3" fill="#b3b3b3"/>
<polygon points="515.6,533.3 517.3,531.8 519.7,533.3" fill="#b3b3b3"/>
<polygon points="538.4,533.3 544.5,522.4 551.6,528.7 558.5,526.7 565.4,518.6 569.1,533.3" fill="#b3b3b3"/>
<polyline points="0.0,561.0 3.8,559.0 17.8,543.7 24.7,552.6 31.0,554.2 38.1,548.3 45.8,536.9 52.1,534.8 59.0,534.3 66.6,531.0 73.8,533.0 79.3,549.6 87.2,542.0 93.6,543.7 100.0,532.6 106.8,531.0 113.9,536.9 127.2,524.2 134.3,518.3 141.1,525.4 155.1,523.4 161.5,513.2 168.4,525.4 175.5,523.4 181.8,518.6 188.7,545.3 195.3,547.3 202.2,541.5 209.8,533.0 217.4,532.6 223.8,531.3 230.2,535.1 236.5,534.8 243.6,531.3 250.0,548.3 251.3,549.8 257.1,549.6 264.0,570.7 271.1,579.3 278.0,572.5 285.1,564.9 292.0,556.5 298.3,554.9 305.4,558.5 312.3,559.0 318.7,556.5 325.8,572.5 332.7,560.5 339.0,552.1 346.1,538.7 353.0,540.2 359.9,538.1 367.0,535.6 374.1,528.0 380.5,524.2 387.3,526.7 394.5,541.2 401.8,539.9 408.2,548.3 415.3,544.8 421.7,544.8 428.5,533.8 435.1,527.5 442.0,525.9 448.9,519.1 455.5,525.9 462.4,519.6 469.2,535.6 476.3,567.4 482.7,575.0 490.3,582.7 496.7,583.9 500.0,572.0 503.8,554.7 510.2,538.1 517.3,531.8 524.2,536.1 531.0,538.7 538.1,533.8 544.5,522.4 551.6,528.7 558.5,526.7 565.4,518.6 572.0,544.5 578.8,548.3 585.7,541.2 592.3,554.2 599.2,553.4 606.3,549.6 613.2,553.9 620.0,563.6 626.7,569.9 633.5,570.7 640.4,569.9 647.0,553.9 653.9,546.5 660.7,549.6 667.9,559.8 675.0,559.0 681.8,571.2 688.7,578.3 695.3,574.3 702.2,586.5 709.0,573.8 716.2,581.4 723.3,574.5 730.2,576.3 737.0,564.3 742.9,561.2 750.0,565.2 756.9,555.2 763.8,558.8 770.3,558.0 777.4,567.6 784.0,571.2 790.7,565.7 797.6,570.4 804.4,566.3 811.3,559.6" fill="none" stroke="#111" stroke-width="1.3" stroke-linejoin="round"/>
<rect x="0" y="430" width="112" height="27" fill="#fff" fill-opacity="0.72"/>
<rect x="118" y="430" width="138" height="27" fill="#fff" fill-opacity="0.72"/>
<rect x="2" y="515" width="74" height="22.5" fill="#fff" fill-opacity="0.72"/>
<text x="934" y="123.8" font-family="Liberation Sans, sans-serif" font-size="11" fill="#333">3,500</text>
<text x="934" y="222.8" font-family="Liberation Sans, sans-serif" font-size="11" fill="#333">3,250</text>
<text x="934" y="321.8" font-family="Liberation Sans, sans-serif" font-size="11" fill="#333">3,000</text>
<text x="934" y="420.8" font-family="Liberation Sans, sans-serif" font-size="11" fill="#333">2,750</text>
<text x="934" y="517.3" font-family="Liberation Sans, sans-serif" font-size="11" fill="#333">80.0</text>
<text x="934" y="536.3" font-family="Liberation Sans, sans-serif" font-size="11" fill="#333">70.0</text>
<text x="934" y="555.3" font-family="Liberation Sans, sans-serif" font-size="11" fill="#333">60.0</text>
<text x="934" y="574.3" font-family="Liberation Sans, sans-serif" font-size="11" fill="#333">50.0</text>
<text x="934" y="593.3" font-family="Liberation Sans, sans-serif" font-size="11" fill="#333">40.0</text>
<text x="110.5" y="614.5" text-anchor="middle" font-family="Liberation Sans, sans-serif" font-size="11" fill="#333">Feb</text>
<text x="274.5" y="614.5" text-anchor="middle" font-family="Liberation Sans, sans-serif" font-size="11" fill="#333">Mar</text>
<text x="452.5" y="614.5" text-anchor="middle" font-family="Liberation Sans, sans-serif" font-size="11" fill="#333">Apr</text>
<text x="623.5" y="614.5" text-anchor="middle" font-family="Liberation Sans, sans-serif" font-size="11" fill="#333">May</text>
<text x="801.5" y="614.5" text-anchor="middle" font-family="Liberation Sans, sans-serif" font-size="11" fill="#333">Jun</text>
<path d="M920,169.5 L926,161.5 L962,161.5 Q964,161.5 964,163.5 L964,175.5 Q964,177.5 962,177.5 L926,177.5 Z" fill="#f98a1e"/><text x="934" y="173.5" font-family="Liberation Sans, sans-serif" font-size="11" fill="#222">3,379</text>
<path d="M920,182.4 L926,174.4 L977,174.4 Q979,174.4 979,176.4 L979,188.4 Q979,190.4 977,190.4 L926,190.4 Z" fill="#6462aa"/><text x="934" y="186.4" font-family="Liberation Sans, sans-serif" font-size="11" fill="#fff">3,347.50</text>
<path d="M920,209.8 L926,201.8 L962,201.8 Q964,201.8 964,203.8 L964,215.8 Q964,217.8 962,217.8 L926,217.8 Z" fill="#3cc8c8"/><text x="934" y="213.8" font-family="Liberation Sans, sans-serif" font-size="11" fill="#222">3,278</text>
<path d="M920,249.7 L926,241.7 L962,241.7 Q964,241.7 964,243.7 L964,255.7 Q964,257.7 962,257.7 L926,257.7 Z" fill="#f98a1e"/><text x="934" y="253.7" font-family="Liberation Sans, sans-serif" font-size="11" fill="#222">3,176</text>
<path d="M920,559.3 L927.5,551.6 L956,551.6 Q958.2,551.6 958.2,553.8 L958.2,564.8 Q958.2,567 956,567 L927.5,567 Z" fill="#000"/>
<text x="934" y="563" font-family="Liberation Sans, sans-serif" font-size="11" fill="#fff">56.6</text>
<text x="7.3" y="447" font-family="Liberation Sans, sans-serif" font-size="10" font-weight="bold" letter-spacing="0.4" fill="#333">VWAP</text>
<text x="41" y="447" font-family="Liberation Sans, sans-serif" font-size="10" letter-spacing="0.15" fill="#444">20 1 2 3</text>
<g transform="translate(89,443.9)" fill="#919191"><rect x="-1" y="-5.9" width="2" height="3" transform="rotate(0)"/><rect x="-1" y="-5.9" width="2" height="3" transform="rotate(45)"/><rect x="-1" y="-5.9" width="2" height="3" transform="rotate(90)"/><rect x="-1" y="-5.9" width="2" height="3" transform="rotate(135)"/><rect x="-1" y="-5.9" width="2" height="3" transform="rotate(180)"/><rect x="-1" y="-5.9" width="2" height="3" transform="rotate(225)"/><rect x="-1" y="-5.9" width="2" height="3" transform="rotate(270)"/><rect x="-1" y="-5.9" width="2" height="3" transform="rotate(315)"/><circle r="4.2"/><circle r="1.8" fill="#fff"/></g>
<path d="M102.5,440.29999999999995 L109.69999999999999,447.5 M109.69999999999999,440.29999999999995 L102.5,447.5" stroke="#919191" stroke-width="2.6"/>
<text x="125" y="447" font-family="Liberation Sans, sans-serif" font-size="10" font-weight="bold" fill="#333">AUTO TREND</text>
<text x="194.8" y="447" font-family="Liberation Sans, sans-serif" font-size="10" letter-spacing="0.5" fill="#444">1 1 2</text>
<g transform="translate(229,444)" fill="#919191"><rect x="-1" y="-5.9" width="2" height="3" transform="rotate(0)"/><rect x="-1" y="-5.9" width="2" height="3" transform="rotate(45)"/><rect x="-1" y="-5.9" width="2" height="3" transform="rotate(90)"/><rect x="-1" y="-5.9" width="2" height="3" transform="rotate(135)"/><rect x="-1" y="-5.9" width="2" height="3" transform="rotate(180)"/><rect x="-1" y="-5.9" width="2" height="3" transform="rotate(225)"/><rect x="-1" y="-5.9" width="2" height="3" transform="rotate(270)"/><rect x="-1" y="-5.9" width="2" height="3" transform="rotate(315)"/><circle r="4.2"/><circle r="1.8" fill="#fff"/></g>
<path d="M242.3,440.4 L249.5,447.6 M249.5,440.4 L242.3,447.6" stroke="#919191" stroke-width="2.6"/>
<text x="7.6" y="528.8" font-family="Liberation Sans, sans-serif" font-size="10" font-weight="bold" letter-spacing="-0.3" fill="#333">RSI</text>
<text x="26.6" y="528.8" font-family="Liberation Sans, sans-serif" font-size="10" fill="#444">14</text>
<g transform="translate(48.8,526.7)" fill="#919191"><rect x="-1" y="-5.9" width="2" height="3" transform="rotate(0)"/><rect x="-1" y="-5.9" width="2" height="3" transform="rotate(45)"/><rect x="-1" y="-5.9" width="2" height="3" transform="rotate(90)"/><rect x="-1" y="-5.9" width="2" height="3" transform="rotate(135)"/><rect x="-1" y="-5.9" width="2" height="3" transform="rotate(180)"/><rect x="-1" y="-5.9" width="2" height="3" transform="rotate(225)"/><rect x="-1" y="-5.9" width="2" height="3" transform="rotate(270)"/><rect x="-1" y="-5.9" width="2" height="3" transform="rotate(315)"/><circle r="4.2"/><circle r="1.8" fill="#fff"/></g>
<path d="M62.300000000000004,523.1 L69.5,530.3000000000001 M69.5,523.1 L62.300000000000004,530.3000000000001" stroke="#919191" stroke-width="2.6"/>
<path d="M88.6,531.9 L88.6,520.8 M83,526.4 L88.6,520.8 L94.2,526.4" fill="none" stroke="#444" stroke-width="1.1"/>
</svg>
</body></html>
